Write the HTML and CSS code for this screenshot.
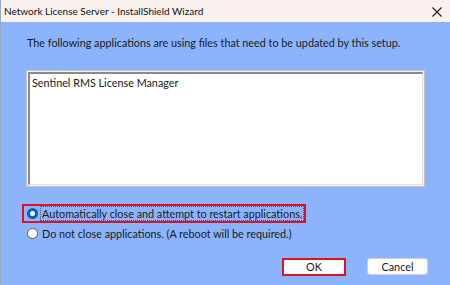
FILE: index.html
```html
<!DOCTYPE html>
<html lang="en">
<head>
  <meta charset="UTF-8">
  <title>Network License Server - InstallShield Wizard</title>
  <link rel="stylesheet" href="styles.css">
</head>
<body>
  <div class="window">
    <div class="titlebar">
      <span class="title">Network License Server - InstallShield Wizard</span>
      <span class="close">
        <svg width="10" height="10" viewBox="0 0 10 10">
          <path d="M0.5 0.5 L9.5 9.5 M9.5 0.5 L0.5 9.5" stroke="#1a1a1a" stroke-width="1.1" fill="none"/>
        </svg>
      </span>
    </div>
    <div class="content">
      <p class="intro">The following applications are using files that need to be updated by this setup.</p>
      <div class="listbox">
        <div class="listbox-inner">
          <div class="list-item">Sentinel RMS License Manager</div>
        </div>
      </div>
      <div class="options">
        <label class="option highlighted">
          <span class="radio checked"></span>
          <span class="option-text focus">Automatically close and attempt to restart applications.</span>
        </label>
        <label class="option">
          <span class="radio"></span>
          <span class="option-text">Do not close applications. (A reboot will be required.)</span>
        </label>
      </div>
      <div class="buttons">
        <button class="btn btn-ok">OK</button>
        <button class="btn btn-cancel">Cancel</button>
      </div>
    </div>
  </div>
</body>
</html>
```

FILE: styles.css
```css
body {
  margin: 0;
  padding: 0;
  background: #8cb4fc;
  font-family: 'Lato', 'Open Sans', sans-serif;
  font-size: 10.8px;
  color: #1a1a1a;
}

.window {
  width: 450px;
  height: 285px;
  box-sizing: border-box;
  border-left: 1px solid #9aa6bb;
  display: flex;
  flex-direction: column;
  background: #8cb4fc;
}

.titlebar {
  height: 22px;
  flex: none;
  background: #faf0ed;
  display: flex;
  align-items: center;
  justify-content: space-between;
  padding: 0 8px 0 3px;
}

.title {
  font-size: 10px;
  color: #111;
}

.close {
  display: flex;
  margin-top: 1px;
}

.content {
  padding: 0 25px;
  flex: 1;
  display: flex;
  flex-direction: column;
}

.intro {
  margin: 13px 0 0 1px;
  line-height: 15px;
}

.listbox {
  margin-top: 20px;
  height: 117px;
  flex: none;
  box-sizing: border-box;
  border: 1px solid #c4c4c4;
  padding: 1px;
  background: #f4f4f4;
}

.listbox-inner {
  height: 100%;
  box-sizing: border-box;
  background: #fff;
  border-top: 2px solid #8a8a8a;
  border-left: 2px solid #8a8a8a;
  border-right: 1px solid #e0e0e0;
  border-bottom: 1px solid #e0e0e0;
  padding: 1px 2px;
}

.list-item {
  line-height: 15px;
}

.options {
  margin-top: 17px;
  margin-left: -4px;
  display: flex;
  flex-direction: column;
  gap: 1px;
}

.option {
  display: flex;
  align-items: center;
  gap: 2px;
  height: 15px;
  padding-left: 3px;
  width: fit-content;
  border: 2px solid transparent;
}

.option.highlighted {
  border-color: #e01020;
}

.radio {
  width: 11px;
  height: 11px;
  border-radius: 50%;
  box-sizing: border-box;
  border: 1px solid #5a5a5a;
  background: #fff;
}

.radio.checked {
  border: 3px solid #0063c6;
  background: #fff;
}

.option-text {
  padding: 0 1px;
  line-height: 13px;
  border: 1px dotted transparent;
}

.option-text.focus {
  border-color: #555;
}

.buttons {
  margin-top: auto;
  margin-bottom: 9px;
  display: flex;
  justify-content: flex-end;
  gap: 21px;
  margin-right: -3px;
}

.btn {
  font-family: inherit;
  font-size: 10.8px;
  background: #fff;
  color: #1a1a1a;
  border: 1px solid #d0d0d0;
  border-radius: 3px;
  height: 17px;
  padding: 0;
  line-height: 14px;
}

.btn-ok {
  width: 64px;
  height: 18px;
  border: 2px solid #e01020;
  border-radius: 0;
}

.btn-cancel {
  width: 61px;
}
```
